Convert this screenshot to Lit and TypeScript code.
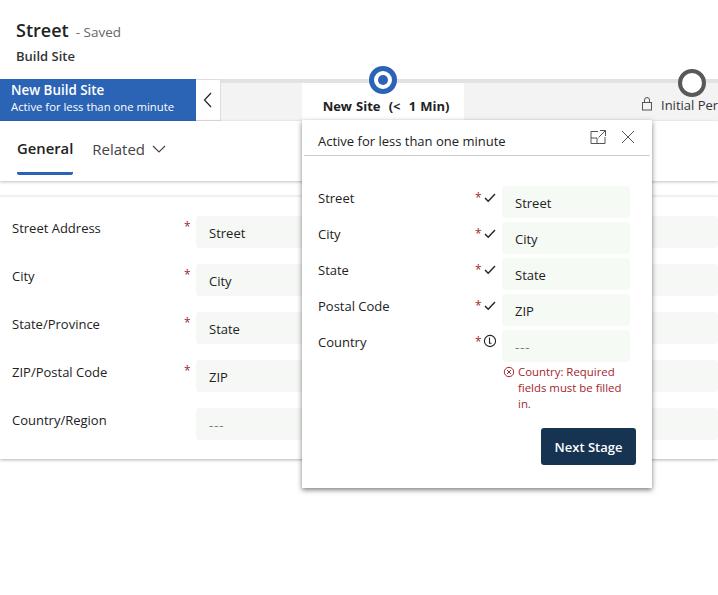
import { LitElement, html, css, svg } from 'lit';
import { customElement } from 'lit/decorators.js';

const mainFields = [
    { label: 'Street Address', value: 'Street', required: true },
    { label: 'City', value: 'City', required: true },
    { label: 'State/Province', value: 'State', required: true },
    { label: 'ZIP/Postal Code', value: 'ZIP', required: true },
    { label: 'Country/Region', value: '---', required: false },
];

const flyoutFields = [
    { label: 'Street', value: 'Street', ok: true },
    { label: 'City', value: 'City', ok: true },
    { label: 'State', value: 'State', ok: true },
    { label: 'Postal Code', value: 'ZIP', ok: true },
    { label: 'Country', value: '---', ok: false },
];

const check = svg`<path d="M2 8l3.2 3.2L12 4.1" fill="none" stroke="#222" stroke-width="1.4"/>`;
const info = svg`<circle cx="7" cy="7" r="5.6" fill="none" stroke="#222" stroke-width="1.1"/><path d="M6.5 3.6v5.6h2" fill="none" stroke="#222" stroke-width="1.1"/>`;

@customElement('app-root')
export class AppRoot extends LitElement {
    static styles = css`
    :host {
      display: block;
      position: relative;
      height: 595px;
      overflow: hidden;
      background: #fff;
      font-family: "Open Sans", "Noto Sans", sans-serif;
      font-size: 13px;
      color: #222;
    }
    .header { height: 79px; padding: 18px 16px 0; box-sizing: border-box; }
    .title { display: flex; align-items: baseline; gap: 7px; line-height: 24px; }
    .title b { font-size: 18px; font-weight: 600; color: #222; }
    .title span { font-size: 13.5px; color: #666; }
    .subtitle { font-size: 13px; font-weight: 600; line-height: 18px; margin-top: 3px; color: #333; }

    .process { position: relative; height: 42px; display: flex; background: #f3f3f3; border-top: 4px solid #e2e2e2; box-sizing: border-box; }
    .stage-name {
      width: 196px; margin-top: -4px; height: 42px; box-sizing: border-box; flex: none;
      background: #2b64b5; color: #fff; padding: 3px 11px 0; line-height: 16px; font-size: 11.3px; white-space: nowrap;
    }
    .stage-name b { display: block; font-size: 13.4px; line-height: 17px; font-weight: 600; }
    .collapse {
      width: 25px; height: 42px; margin-top: -4px; flex: none; box-sizing: border-box; background: #fff;
      border: 1px solid #ddd; border-left: none; display: flex; align-items: center; justify-content: center;
    }
    .active-stage {
      margin-left: 81px; width: 162px; flex: none; background: #fff; text-align: center; font-weight: 700; font-size: 13px;
      line-height: 18px; padding: 14px 0 0 6px; box-sizing: border-box; word-spacing: .7px; position: relative; white-space: pre;
    }
    .next-stage { margin-left: 177px; flex: none; display: flex; gap: 8px; padding-top: 13px; font-size: 13px; line-height: 18px; white-space: nowrap; color: #333; }
    .ring { position: absolute; box-sizing: border-box; border-radius: 50%; background: #fff; }
    .ring.current { left: 67px; top: -17px; width: 28px; height: 28px; border: 5px solid #2b64b5; }
    .ring.current::after { content: ''; position: absolute; inset: 4px; border-radius: 50%; background: #2b64b5; }
    .ring.locked { left: 678px; top: -14px; width: 28px; height: 28px; border: 4px solid #595959; }

    .tabs { height: 60px; display: flex; align-items: flex-start; gap: 20px; padding: 0 0 0 17px; box-shadow: 0 1px 3px rgba(0,0,0,.25); position: relative; font-size: 15px; box-sizing: border-box; }
    .tab { height: 54px; box-sizing: border-box; line-height: 56px; display: flex; align-items: center; gap: 7px; color: #444; padding-top: 2px; }
    .tab + .tab { margin-left: -1px; }
    .tab.on { color: #222; font-weight: 600; font-size: 14.8px; border-bottom: 3px solid #2b64b5; border-radius: 0 0 2px 2px; }

    .card { margin-top: 15px; height: 263px; padding: 19px 0 0 12px; box-sizing: border-box; border-top: 1px solid #eee; box-shadow: 0 1px 3px rgba(0,0,0,.3); display: flex; flex-direction: column; gap: 16px; }
    .row { display: flex; height: 32px; }
    .row label { width: 172px; flex: none; line-height: 24px; }
    .req { color: #a4262c; width: 12px; flex: none; font-size: 12px; line-height: 21px; }
    .input { flex: 1; height: 32px; background: #f5f8f5; border-radius: 4px; line-height: 34px; padding-left: 13px; }
    .input.empty { color: #777; letter-spacing: 1px; }

    .flyout {
      position: absolute; left: 302px; top: 120px; width: 350px; height: 368px; box-sizing: border-box;
      background: #fff; box-shadow: 0 2px 5px rgba(0,0,0,.5);
    }
    .fly-head { margin: 0 2px; height: 36px; box-sizing: border-box; padding: 12px 14px 0; border-bottom: 1px solid #ccc; display: flex; justify-content: space-between; line-height: 18px; }
    .fly-icons { display: flex; gap: 15px; margin-top: -3px; margin-right: 1px; }
    .fly-body { padding: 30px 16px 0 16px; display: flex; flex-direction: column; gap: 4px; }
    .fly-row { display: flex; height: 32px; }
    .fly-row label { width: 157px; flex: none; line-height: 24px; }
    .fly-row .req { width: 8px; line-height: 23px; }
    .fly-row svg { margin: 4px 5px 0 0; flex: none; }
    .fly-row .input { flex: none; width: 128px; box-sizing: border-box; background: #f5faf5; }
    .error { margin: -2px 0 0 185px; width: 125px; display: flex; gap: 3px; color: #a4262c; font-size: 11.4px; line-height: 16px; }
    .error svg { flex: none; margin-top: 2px; }
    .actions { display: flex; justify-content: flex-end; margin-top: 12px; }
    button {
      width: 95px; height: 37px; border: none; border-radius: 3px; background: #163352; color: #fff;
      font: 600 13px "Open Sans", sans-serif;
    }
    `;

    render() {
        return html`
      <div class="header">
        <div class="title"><b>Street</b><span>- Saved</span></div>
        <div class="subtitle">Build Site</div>
      </div>
      <div class="process">
        <div class="stage-name"><b>New Build Site</b>Active for less than one minute</div>
        <div class="collapse">
          <svg width="10" height="16" viewBox="0 0 10 16"><path d="M8 1L1.5 8 8 15" fill="none" stroke="#222" stroke-width="1.2"/></svg>
        </div>
        <div class="active-stage"><span class="ring current"></span>New Site  (&lt;  1 Min)</div>
        <div class="next-stage">
          <svg width="12" height="16" viewBox="0 0 12 16"><rect x="1.5" y="6.5" width="9" height="7.5" fill="none" stroke="#555"/><path d="M3.5 6.5V4a2.5 2.5 0 015 0v2.5" fill="none" stroke="#555"/></svg>
          <span>Initial Per</span>
        </div>
        <span class="ring locked"></span>
      </div>
      <div class="tabs">
        <div class="tab on">General</div>
        <div class="tab">Related
          <svg width="14" height="10" viewBox="0 0 14 10"><path d="M1 2l6 6 6-6" fill="none" stroke="#444" stroke-width="1.1"/></svg>
        </div>
      </div>
      <div class="card">
        ${mainFields.map(f => html`
          <div class="row">
            <label>${f.label}</label>
            <span class="req">${f.required ? '*' : ''}</span>
            <div class="input ${f.value === '---' ? 'empty' : ''}">${f.value}</div>
          </div>`)}
      </div>
      <div class="flyout">
        <div class="fly-head">
          <span>Active for less than one minute</span>
          <span class="fly-icons">
            <svg width="16" height="16" viewBox="0 0 16 16"><path d="M8 2.5H1v12h14V8M1 9h6v5.5M10 1.5h5.5V7M15.5 1.5L8.5 8.5" fill="none" stroke="#555"/></svg>
            <svg width="14" height="16" viewBox="0 0 14 16"><path d="M1 2l12 12M13 2L1 14" fill="none" stroke="#555"/></svg>
          </span>
        </div>
        <div class="fly-body">
          ${flyoutFields.map(f => html`
            <div class="fly-row">
              <label>${f.label}</label>
              <span class="req">*</span>
              <svg width="14" height="14" viewBox="0 0 14 14">${f.ok ? check : info}</svg>
              <div class="input ${f.value === '---' ? 'empty' : ''}">${f.value}</div>
            </div>`)}
          <div class="error">
            <svg width="12" height="12" viewBox="0 0 12 12"><circle cx="6" cy="6" r="4.7" fill="none" stroke="#a4262c"/><path d="M4 4l4 4M8 4l-4 4" stroke="#a4262c"/></svg>
            <span>Country: Required fields must be filled in.</span>
          </div>
          <div class="actions"><button>Next Stage</button></div>
        </div>
      </div>
    `;
    }
}
